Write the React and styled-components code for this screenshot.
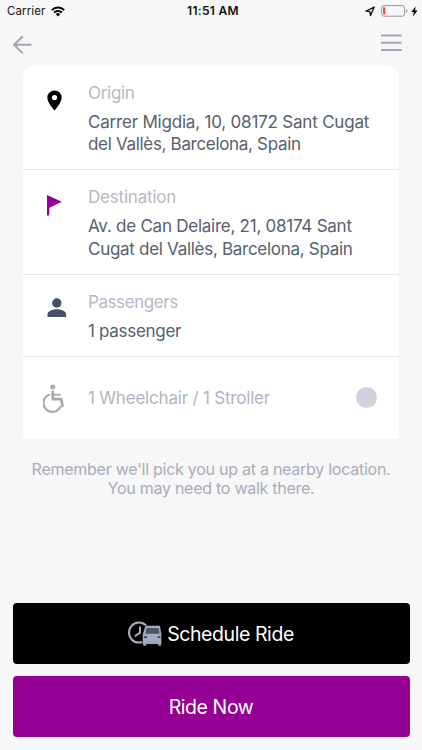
import React from "react";
import styled, { createGlobalStyle } from "styled-components";

const GlobalStyle = createGlobalStyle`
  * { box-sizing: border-box; }
  body { margin: 0; background: #f7f7f7; }
  svg { flex-shrink: 0; display: block; }
`;

const Screen = styled.main`
  display: flex;
  flex-direction: column;
  width: 422px;
  height: 750px;
  overflow: hidden;
  background: #f7f7f7;
  font-family: Inter, "Liberation Sans", sans-serif;
`;

const StatusBar = styled.header`
  display: grid;
  grid-template-columns: 1fr auto 1fr;
  align-items: center;
  height: 22px;
  padding: 0 4px 0 7px;
  font-size: 11.5px;
  line-height: 22px;
  color: #111;
`;

const StatusGroup = styled.div`
  display: flex;
  align-items: center;
  justify-content: ${(p) => (p.$end ? "flex-end" : "flex-start")};
  gap: ${(p) => (p.$end ? "3px" : "6px")};
  letter-spacing: 0.1px;
`;

const Clock = styled.time`
  font-weight: 600;
  font-size: 12px;
  letter-spacing: 0.3px;
  padding-left: 1px;
`;

const NavBar = styled.nav`
  display: flex;
  justify-content: space-between;
  align-items: flex-start;
  height: 43.5px;
  padding: 11px 20px 0 11.5px;
`;

const IconButton = styled.button`
  display: flex;
  padding: 0;
  border: 0;
  background: none;
  color: #a0a6b8;
`;

const BackButton = styled(IconButton)`
  padding-top: 2px;
`;

const Card = styled.section`
  width: 376.5px;
  margin: 0 0 0 22.5px;
  border-radius: 11px 11px 0 0;
  background: #fff;
`;

const Row = styled.div`
  display: flex;
  height: ${(p) => p.$height}px;
  border-bottom: ${(p) => (p.$last ? "0" : "1px solid #e9e9eb")};
  align-items: ${(p) => (p.$last ? "center" : "flex-start")};
`;

const IconCell = styled.div`
  display: flex;
  flex: 0 0 65.5px;
  padding: ${(p) => p.$top}px 0 0 ${(p) => p.$left}px;
`;

const Label = styled.div`
  padding-top: 15.4px;
  font-size: 17px;
  line-height: 24px;
  letter-spacing: ${(p) => p.$tracking || 0}px;
  color: #b6b8c6;
  white-space: nowrap;
`;

const Value = styled.div`
  padding-top: 5.8px;
  font-size: 17px;
  line-height: 22.5px;
  color: #566070;
  white-space: nowrap;
`;

const Line = styled.div`
  letter-spacing: ${(p) => p.$tracking || 0}px;
`;

const OptionLabel = styled.div`
  flex: 1;
  font-size: 17px;
  line-height: 24px;
  letter-spacing: -0.2px;
  color: #b2b4c2;
  white-space: nowrap;
`;

const OptionDot = styled.span`
  width: 21px;
  height: 21px;
  margin: 0 22px 1px 0;
  border-radius: 50%;
  background: #d0d2dc;
`;

const Note = styled.p`
  margin: 20.5px 0 0;
  font-size: 16px;
  line-height: 19.5px;
  text-align: center;
  letter-spacing: -0.26px;
  color: #a9acbc;
  white-space: nowrap;
`;

const Actions = styled.footer`
  display: flex;
  flex-direction: column;
  gap: 12px;
  margin-top: auto;
  padding: 0 12.5px 13px;
`;

const ActionButton = styled.button`
  display: flex;
  align-items: center;
  justify-content: center;
  gap: 5px;
  height: 61px;
  padding: 0;
  border: 0;
  border-radius: 4px;
  background: ${(p) => (p.$primary ? "#940094" : "#000")};
  color: #fff;
  font: 400 19.5px/24px Inter, "Liberation Sans", sans-serif;
  letter-spacing: -0.42px;
`;

const WifiIcon = () => (
  <svg width="14" height="11" viewBox="0 0 14 11" fill="none" stroke="#000" strokeWidth="2">
    <path d="M.8 4.1a8.8 8.8 0 0 1 12.4 0M3.1 6.5a5.5 5.5 0 0 1 7.8 0" />
    <path d="M7 10.4 4.8 8.2a3.1 3.1 0 0 1 4.4 0z" fill="#000" stroke="none" />
  </svg>
);

const LocationIcon = () => (
  <svg width="13" height="11" viewBox="0 0 13 11" fill="none" stroke="#111" strokeWidth="1.3" strokeLinejoin="round">
    <path d="M9.3 1.1 1 5.1l3.9.6.6 3.9z" />
  </svg>
);

const BatteryIcon = () => (
  <svg width="27" height="12" viewBox="0 0 27 12">
    <rect x=".6" y=".6" width="23" height="10.6" rx="2.4" fill="none" stroke="#999" />
    <rect x="2.1" y="2.2" width="2.2" height="7.4" rx=".8" fill="#ee3f43" />
    <path d="M25 4v4c1.8-.7 1.8-3.3 0-4z" fill="#999" />
  </svg>
);

const BoltIcon = () => (
  <svg width="7" height="11" viewBox="0 0 7 11">
    <path d="M4.7.5.3 6h2.5l-.9 4.5L6.6 4.6H4z" fill="#000" />
  </svg>
);

const ArrowIcon = () => (
  <svg width="20" height="20" viewBox="0 0 20 20" fill="none" stroke="currentColor" strokeWidth="2">
    <path d="M10.8 1.2 2 9.8l8.8 8.6M2 9.8h17.4" />
  </svg>
);

const MenuIcon = () => (
  <svg width="22" height="20" viewBox="0 0 22 20" fill="none" stroke="currentColor" strokeWidth="1.9">
    <path d="M1 2.5h20.5M1 9.8h20.5M1 17h20.5" />
  </svg>
);

const PinIcon = () => (
  <svg width="15" height="21" viewBox="0 0 15 21">
    <path fillRule="evenodd" d="M7.5.4A7.2 7.2 0 0 0 .3 7.6C.3 13 7.5 20.5 7.5 20.5s7.2-7.5 7.2-12.9A7.2 7.2 0 0 0 7.5.4zm0 4.6a2.6 2.6 0 1 1 0 5.2 2.6 2.6 0 0 1 0-5.2z" />
  </svg>
);

const FlagIcon = () => (
  <svg width="15" height="21" viewBox="0 0 15 21" fill="#940094">
    <path d="M0 0 14.8 6.8 2.3 12.8v7.7H0z" />
  </svg>
);

const PersonIcon = () => (
  <svg width="20" height="20" viewBox="0 0 20 20" fill="#445064">
    <circle cx="9.8" cy="5" r="4.7" />
    <path d="M.5 19v-2.8c0-3 5.7-4.9 9.3-4.9s9.3 1.9 9.3 4.9V19z" />
  </svg>
);

const WheelchairIcon = () => (
  <svg width="22" height="29" viewBox="0 0 22 29" fill="none" stroke="#a9a9a9" strokeWidth="2.1" strokeLinecap="round" strokeLinejoin="round">
    <circle cx="9.8" cy="2.9" r="2.5" fill="#a9a9a9" stroke="none" />
    <path d="M9.8 8v7.2h8.5l1.1 6.6" strokeWidth="2.8" />
    <path d="M10.8 10.7h6.8" strokeWidth="1.8" strokeLinecap="butt" />
    <path d="M6.9 10.4a8.9 8.9 0 1 0 10.8 11.8" strokeLinecap="butt" />
  </svg>
);

const ScheduleIcon = () => (
  <svg width="34" height="26" viewBox="0 0 34 26">
    <g fill="none" stroke="#a6afbf" strokeWidth="2">
      <circle cx="11" cy="11.6" r="10" />
      <path d="M12 5.5v6.4l-5.2 3.2" />
    </g>
    <path d="M17 5.3q.2-.9 1.2-.9h12.9q1 0 1.2.9l1.4 8v10h-.5V25H30v-1.7H18.4V25H15v-1.7h-.6v-10z" fill="#a3adbf" stroke="#000" strokeWidth=".6" />
    <path d="M18.6 6.9h12l.9 5.9H17.4z" fill="#4a5668" />
    <path d="M16.2 15.3h2.6v1.6h-2.6zm13.5 0h2.6v1.6h-2.6z" fill="#344154" />
    <path d="M17.6 20.6h13.2" stroke="#8e99ac" strokeWidth=".8" />
  </svg>
);

export default function App() {
  return (
    <>
      <GlobalStyle />
      <Screen>
        <StatusBar>
          <StatusGroup>Carrier<WifiIcon /></StatusGroup>
          <Clock>11:51 AM</Clock>
          <StatusGroup $end><LocationIcon /><BatteryIcon /><BoltIcon /></StatusGroup>
        </StatusBar>
        <NavBar>
          <BackButton aria-label="Back"><ArrowIcon /></BackButton>
          <IconButton aria-label="Menu"><MenuIcon /></IconButton>
        </NavBar>
        <Card>
          <Row $height={104.5}>
            <IconCell $top={24} $left={24.3}><PinIcon /></IconCell>
            <div>
              <Label $tracking={-0.3}>Origin</Label>
              <Value>
                <Line $tracking={-0.2}>Carrer Migdia, 10, 08172 Sant Cugat</Line>
                <Line $tracking={-0.32}>del Vallès, Barcelona, Spain</Line>
              </Value>
            </div>
          </Row>
          <Row $height={104.5}>
            <IconCell $top={24.5} $left={24.5}><FlagIcon /></IconCell>
            <div>
              <Label $tracking={-0.2}>Destination</Label>
              <Value>
                <Line $tracking={-0.25}>Av. de Can Delaire, 21, 08174 Sant</Line>
                <Line $tracking={-0.29}>Cugat del Vallès, Barcelona, Spain</Line>
              </Value>
            </div>
          </Row>
          <Row $height={82.5}>
            <IconCell $top={23.8} $left={24}><PersonIcon /></IconCell>
            <div>
              <Label $tracking={-0.42}>Passengers</Label>
              <Value>
                <Line $tracking={-0.3}>1 passenger</Line>
              </Value>
            </div>
          </Row>
          <Row $height={82} $last>
            <IconCell $top={0} $left={20.5}><WheelchairIcon /></IconCell>
            <OptionLabel>1 Wheelchair / 1 Stroller</OptionLabel>
            <OptionDot />
          </Row>
        </Card>
        <Note>Remember we'll pick you up at a nearby location.<br />You may need to walk there.</Note>
        <Actions>
          <ActionButton><ScheduleIcon />Schedule Ride</ActionButton>
          <ActionButton $primary>Ride Now</ActionButton>
        </Actions>
      </Screen>
    </>
  );
}
